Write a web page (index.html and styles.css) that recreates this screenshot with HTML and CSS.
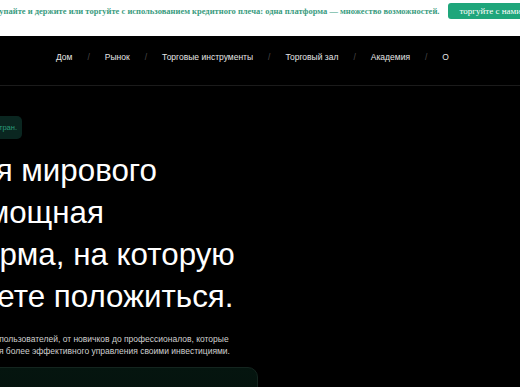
FILE: index.html
```html
<!DOCTYPE html>
<html lang="ru">

<head>
  <meta charset="UTF-8">
  <meta name="viewport" content="width=device-width, initial-scale=1.0">
  <title>Торговая платформа</title>
  <link rel="stylesheet" href="styles.css">
</head>

<body>

  <div class="promo">
    <span class="promo-text">Покупайте и держите или торгуйте с использованием кредитного плеча: одна платформа — множество возможностей.</span>
    <a class="promo-btn" href="#">торгуйте с нами</a>
  </div>

  <div class="nav">
    <a href="#">Дом</a>
    <span class="sep">/</span>
    <a href="#">Рынок</a>
    <span class="sep">/</span>
    <a href="#">Торговые инструменты</a>
    <span class="sep">/</span>
    <a href="#">Торговый зал</a>
    <span class="sep">/</span>
    <a href="#">Академия</a>
    <span class="sep">/</span>
    <a href="#">О</a>
  </div>

  <div class="hero">
    <div class="badge">Доступно более чем в 150 стран.</div>

    <h1 class="title">
      Дом для мирового<br>
      рынка мощная<br>
      платформа, на которую<br>
      вы можете положиться.
    </h1>

    <p class="lead">
      Присоединяйтесь к миллионам пользователей, от новичков до профессионалов, которые<br>
      доверяют нашей платформе для более эффективного управления своими инвестициями.
    </p>

    <div class="card"></div>
  </div>

</body>

</html>
```

FILE: styles.css
```css
html,
body {
  margin: 0;
  background-color: #000;
  font-family: "Liberation Sans", Arial, sans-serif;
  overflow: hidden;
  height: 100%;
}

.promo {
  display: flex;
  justify-content: flex-end;
  align-items: center;
  gap: 9px;
  height: 36px;
  box-sizing: border-box;
  padding-bottom: 14px;
  background-color: #fff;
  font-family: "Liberation Serif", "Times New Roman", serif;
  font-size: 8.5px;
  font-weight: bold;
  white-space: nowrap;
}

.promo-text {
  color: #3a9c80;
  flex-shrink: 0;
}

.promo-btn {
  flex-shrink: 0;
  margin-right: -13px;
  padding: 0 12px 0 11px;
  height: 16px;
  line-height: 16px;
  border-radius: 3px;
  background-color: #1fa67b;
  color: #fff;
  font-weight: normal;
  font-size: 9px;
  text-decoration: none;
}

.nav {
  display: flex;
  align-items: flex-start;
  gap: 15px;
  height: 50px;
  box-sizing: border-box;
  padding: 15px 0 0 56px;
  border-bottom: 1px solid #1b1b1b;
  font-size: 8.5px;
  line-height: 12px;
}

.nav a {
  color: #e6e6e6;
  text-decoration: none;
}

.nav .sep {
  color: #4a4a4a;
}

.hero {
  margin-left: -110px;
  padding-top: 30px;
}

.badge {
  display: inline-block;
  box-sizing: border-box;
  width: 132px;
  height: 23px;
  line-height: 23px;
  padding: 0 5px;
  border-radius: 5px;
  background-color: #0a2620;
  color: #2a9a78;
  font-size: 7.5px;
  text-align: right;
  white-space: nowrap;
}

.title {
  margin: 11px 0 0;
  color: #fff;
  font-size: 31.3px;
  font-weight: 400;
  line-height: 42px;
  white-space: nowrap;
}

.lead {
  margin: 15px 0 0 -17px;
  color: #d0d0d0;
  font-size: 8.5px;
  line-height: 12px;
  white-space: nowrap;
}

.card {
  width: 368px;
  height: 120px;
  margin-top: 10px;
  box-sizing: border-box;
  border: 1px solid #14251f;
  border-radius: 10px;
  background: linear-gradient(180deg, #05150f, #030a08);
}
```
